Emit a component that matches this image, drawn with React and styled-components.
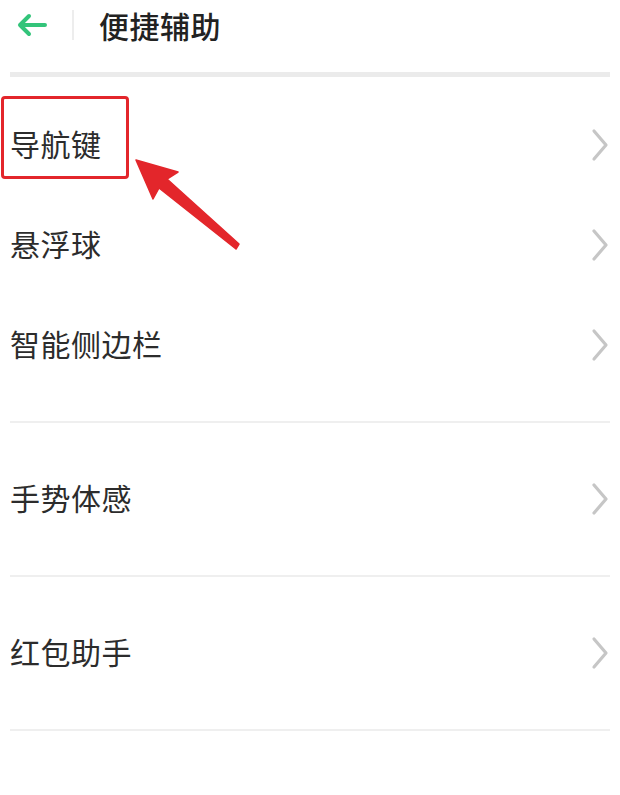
import React from "react";
import styled, { createGlobalStyle } from "styled-components";

const Global = createGlobalStyle`
  html, body { margin: 0; padding: 0; background: #ffffff; }
  body { font-family: "Noto Sans CJK SC", "Noto Sans", sans-serif; }
`;

const Page = styled.div`
  position: relative;
  width: 620px;
  height: 795px;
  background: #fff;
  overflow: hidden;
`;

const Header = styled.div`
  height: 72px;
  box-sizing: border-box;
  display: flex;
  align-items: center;
  padding: 0 0 22px 14px;
`;

const BackButton = styled.div`
  width: 34px;
  height: 30px;
  display: flex;
  align-items: center;
  justify-content: center;
`;

const Separator = styled.div`
  width: 2px;
  height: 30px;
  background: #ededed;
  margin: 0 25px 0 24px;
`;

const Title = styled.h1`
  margin: 0;
  font-size: 30px;
  font-weight: 500;
  color: #222;
  line-height: 1;
  letter-spacing: 0.5px;
`;

const Rule = styled.div`
  height: ${(p) => p.$h || 2}px;
  background: ${(p) => p.$c || "#efefef"};
  margin: 0 10px;
`;

const Group = styled.div`
  padding: ${(p) => p.$pad || "0"};
`;

const Row = styled.div`
  height: ${(p) => p.$h}px;
  display: flex;
  align-items: center;
  justify-content: space-between;
  padding: 0 10px 0 10px;
`;

const Label = styled.span`
  font-size: 30px;
  color: #2c2c2c;
  line-height: 1;
  letter-spacing: 0.5px;
  margin-top: -4px;
`;

const Chevron = () => (
  <svg width="20" height="34" viewBox="0 0 20 34">
    <polyline
      points="4,3 16,17 4,31"
      fill="none"
      stroke="#c6c6c6"
      strokeWidth="3.2"
      strokeLinecap="round"
      strokeLinejoin="round"
    />
  </svg>
);

const Highlight = styled.div`
  position: absolute;
  left: 1px;
  top: 96px;
  width: 122px;
  height: 77px;
  border: 3px solid #e3262b;
  border-radius: 4px;
`;

const Overlay = styled.svg`
  position: absolute;
  left: 0;
  top: 0;
  pointer-events: none;
`;

const items1 = ["导航键", "悬浮球", "智能侧边栏"];

export default function App() {
  return (
    <Page>
      <Global />
      <Header>
        <BackButton>
          <svg width="32" height="26" viewBox="0 0 32 26">
            <path
              d="M30 13 H5 M14 4 L5 13 L14 22"
              fill="none"
              stroke="#33c47a"
              strokeWidth="4"
              strokeLinecap="round"
              strokeLinejoin="round"
            />
          </svg>
        </BackButton>
        <Separator />
        <Title>便捷辅助</Title>
      </Header>
      <Rule $h={5} $c="#ebebeb" />
      <Group $pad="18px 0 26px 0">
        {items1.map((t) => (
          <Row key={t} $h={100}>
            <Label>{t}</Label>
            <Chevron />
          </Row>
        ))}
      </Group>
      <Rule />
      <Row $h={152}>
        <Label>手势体感</Label>
        <Chevron />
      </Row>
      <Rule />
      <Row $h={152}>
        <Label>红包助手</Label>
        <Chevron />
      </Row>
      <Rule />
      <Highlight />
      <Overlay width="620" height="795" viewBox="0 0 620 795">
        <polygon
          points="136,160 178,172 167,179 239,244 236,249 159,188 153,199"
          fill="#e3262b"
          stroke="#e3262b"
          strokeWidth="1.5"
          strokeLinejoin="round"
        />
      </Overlay>
    </Page>
  );
}
